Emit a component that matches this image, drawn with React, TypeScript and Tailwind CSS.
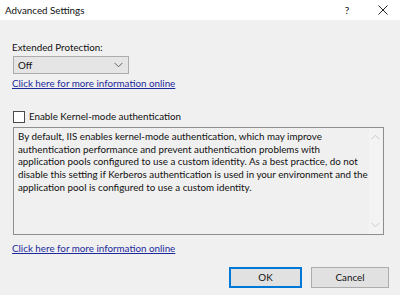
import { useState } from 'react'

const FONT = { fontFamily: 'Lato, "Noto Sans", sans-serif' }

function Chevron({ className }: { className?: string }) {
  return (
    <svg width="9" height="6" viewBox="0 0 9 6" className={className}>
      <path d="M0.5 0.8 L4.5 4.8 L8.5 0.8" fill="none" stroke="currentColor" strokeWidth="1" />
    </svg>
  )
}

function InfoLink() {
  return (
    <a href="#" className="block h-[12px] text-[9.8px] leading-[12px] text-[#1c2a9c] underline underline-offset-1 w-fit">
      Click here for more information online
    </a>
  )
}

const lines = [
  'By default, IIS enables kernel-mode authentication, which may improve',
  'authentication performance and prevent authentication problems with',
  'application pools configured to use a custom identity. As a best practice, do not',
  'disable this setting if Kerberos authentication is used in your environment and the',
  'application pool is configured to use a custom identity.',
]

export default function App() {
  const [kernel, setKernel] = useState(false)

  return (
    <div className="w-[400px] h-[295px] bg-[#f0f0f0] text-[#111] flex flex-col overflow-hidden" style={FONT}>
      {/* title bar */}
      <div className="h-[20px] bg-white flex items-center pl-[5px]">
        <span className="text-[9.8px] flex-1">Advanced Settings</span>
        <span className="text-[10px] w-[12px] text-center mr-[25px]">?</span>
        <svg width="10" height="10" viewBox="0 0 10 10" className="mr-[12px] text-[#222]">
          <path d="M0.5 0.5 L9.5 9.5 M9.5 0.5 L0.5 9.5" stroke="currentColor" strokeWidth="1" />
        </svg>
      </div>

      <div className="flex flex-col px-[12px] pt-[20px]">
        <label className="h-[14px] text-[9.8px] leading-[14px]">Extended Protection:</label>
        <div className="mt-[2px] ml-[1px] w-[116px] h-[18px] border border-[#acacac] bg-[#e5e5e5] flex items-center justify-between pl-[4px] pr-[5px]">
          <span className="text-[9.8px]">Off</span>
          <Chevron className="text-[#666]" />
        </div>
        <div className="mt-[3px]">
          <InfoLink />
        </div>

        <label className="mt-[21px] h-[13px] flex items-center gap-[4px] text-[9.8px] leading-[13px]">
          <span
            onClick={() => setKernel(!kernel)}
            className="ml-[1px] w-[12px] h-[12px] border border-[#4a4a4a] bg-white inline-block"
          >
            {kernel ? '✓' : ''}
          </span>
          Enable Kernel-mode authentication
        </label>

        <div className="mt-[4px] ml-[1px] w-[371px] h-[108px] border border-[#8e8e8e] flex">
          <p className="flex-1 pl-[4px] pt-[2px] text-[9.8px] leading-[12.7px] whitespace-nowrap">
            {lines.map((l) => (
              <span key={l} className="block">{l}</span>
            ))}
          </p>
          <div className="w-[13px] mr-[1px] bg-[#f3f3f3] flex flex-col justify-between items-center py-[6px] text-[#c8c8c8]">
            <Chevron className="rotate-180" />
            <Chevron />
          </div>
        </div>

        <div className="mt-[7px]">
          <InfoLink />
        </div>

        <div className="mt-[13px] flex justify-end gap-[9px]">
          <button className="w-[73px] h-[21px] border border-[#0078d7] shadow-[inset_0_0_0_1px_#0078d7] bg-[#e1e1e1] text-[9.8px]">OK</button>
          <button className="w-[78px] h-[21px] border border-[#adadad] bg-[#e1e1e1] text-[9.8px] mr-[-1px]">Cancel</button>
        </div>
      </div>
    </div>
  )
}
